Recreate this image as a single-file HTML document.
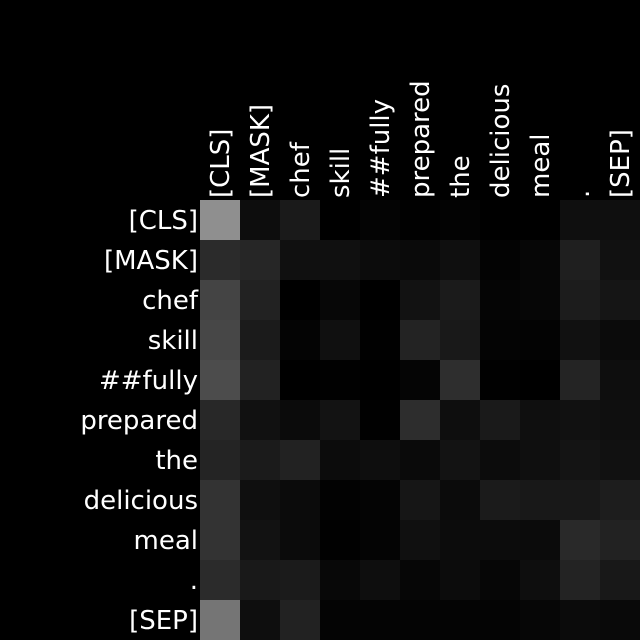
<!DOCTYPE html>
<html><head><style>
html,body{margin:0;padding:0;background:#000;}
svg{display:block}
text{font-family:"DejaVu Sans","Liberation Sans",sans-serif;font-size:26px;fill:#fff;}
</style></head><body>
<svg width="640" height="640" xmlns="http://www.w3.org/2000/svg">
<rect width="640" height="640" fill="#000"/>
<g id="cells"></g>
<g id="rl"></g><g id="cl"></g>
</svg>
<script>
var v=[
"8f,0d,1a,00,04,01,03,00,00,0f,0f",
"2b,26,10,10,0c,0a,0f,03,06,1f,11",
"44,22,00,07,00,12,1b,05,06,1c,15",
"47,1b,04,10,01,23,19,04,03,11,0b",
"4c,22,00,01,00,05,2e,01,00,24,0e",
"28,11,0b,13,01,2d,0e,1a,0f,11,0f",
"24,1b,22,0c,0e,0a,13,0c,0f,14,11",
"33,0f,0b,02,04,16,0b,1b,18,18,1d",
"33,12,0b,01,04,10,0c,0c,0b,29,22",
"2b,19,1b,08,0e,06,0c,06,0e,23,18",
"75,0e,22,04,04,04,04,04,06,0b,09"];
var L=["[CLS]","[MASK]","chef","skill","##fully","prepared","the","delicious","meal",".","[SEP]"];
var ns="http://www.w3.org/2000/svg",c=document.getElementById("cells"),rl=document.getElementById("rl"),cl=document.getElementById("cl");
for(var i=0;i<11;i++){var r=v[i].split(",");for(var j=0;j<11;j++){var e=document.createElementNS(ns,"rect");e.setAttribute("x",200+40*j);e.setAttribute("y",200+40*i);e.setAttribute("width",40);e.setAttribute("height",40);e.setAttribute("fill","#"+r[j]+r[j]+r[j]);c.appendChild(e);}
var t=document.createElementNS(ns,"text");t.setAttribute("x",198);t.setAttribute("y",229+40*i);t.setAttribute("text-anchor","end");t.textContent=L[i];rl.appendChild(t);
var u=document.createElementNS(ns,"text");u.setAttribute("text-anchor","start");u.setAttribute("transform","translate("+(229+40*i)+",198) rotate(-90)");u.textContent=L[i];cl.appendChild(u);}
</script>
</body></html>
